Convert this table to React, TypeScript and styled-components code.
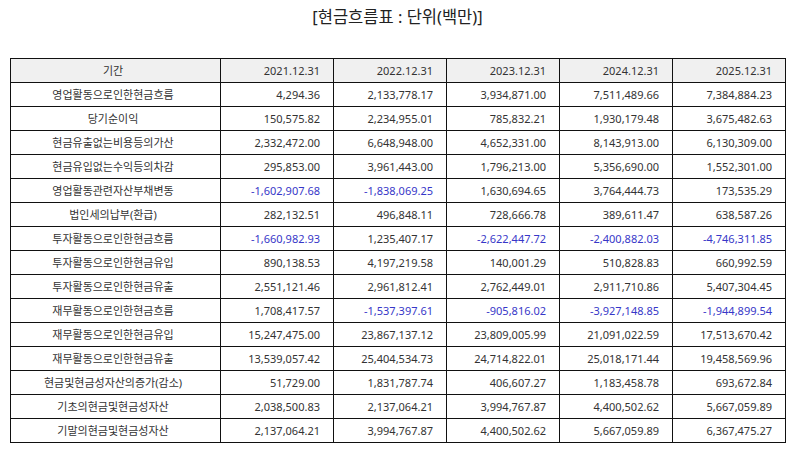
import React, { FC } from 'react';
import styled, { createGlobalStyle } from 'styled-components';

const GlobalStyle = createGlobalStyle`
  html, body {
    margin: 0;
    padding: 0;
    background: #ffffff;
  }
  body {
    font-family: "Noto Sans", "Noto Sans CJK KR", sans-serif;
    color: #333333;
  }
`;

interface Row {
  label: string;
  values: string[];
}

const YEARS: string[] = ['2021.12.31', '2022.12.31', '2023.12.31', '2024.12.31', '2025.12.31'];
const COL_WIDTHS: number[] = [210, 113, 113, 113, 113, 113];

const ROWS: Row[] = [
  { label: '영업활동으로인한현금흐름', values: ['4,294.36', '2,133,778.17', '3,934,871.00', '7,511,489.66', '7,384,884.23'] },
  { label: '당기순이익', values: ['150,575.82', '2,234,955.01', '785,832.21', '1,930,179.48', '3,675,482.63'] },
  { label: '현금유출없는비용등의가산', values: ['2,332,472.00', '6,648,948.00', '4,652,331.00', '8,143,913.00', '6,130,309.00'] },
  { label: '현금유입없는수익등의차감', values: ['295,853.00', '3,961,443.00', '1,796,213.00', '5,356,690.00', '1,552,301.00'] },
  { label: '영업활동관련자산부채변동', values: ['-1,602,907.68', '-1,838,069.25', '1,630,694.65', '3,764,444.73', '173,535.29'] },
  { label: '법인세의납부(환급)', values: ['282,132.51', '496,848.11', '728,666.78', '389,611.47', '638,587.26'] },
  { label: '투자활동으로인한현금흐름', values: ['-1,660,982.93', '1,235,407.17', '-2,622,447.72', '-2,400,882.03', '-4,746,311.85'] },
  { label: '투자활동으로인한현금유입', values: ['890,138.53', '4,197,219.58', '140,001.29', '510,828.83', '660,992.59'] },
  { label: '투자활동으로인한현금유출', values: ['2,551,121.46', '2,961,812.41', '2,762,449.01', '2,911,710.86', '5,407,304.45'] },
  { label: '재무활동으로인한현금흐름', values: ['1,708,417.57', '-1,537,397.61', '-905,816.02', '-3,927,148.85', '-1,944,899.54'] },
  { label: '재무활동으로인한현금유입', values: ['15,247,475.00', '23,867,137.12', '23,809,005.99', '21,091,022.59', '17,513,670.42'] },
  { label: '재무활동으로인한현금유출', values: ['13,539,057.42', '25,404,534.73', '24,714,822.01', '25,018,171.44', '19,458,569.96'] },
  { label: '현금및현금성자산의증가(감소)', values: ['51,729.00', '1,831,787.74', '406,607.27', '1,183,458.78', '693,672.84'] },
  { label: '기초의현금및현금성자산', values: ['2,038,500.83', '2,137,064.21', '3,994,767.87', '4,400,502.62', '5,667,059.89'] },
  { label: '기말의현금및현금성자산', values: ['2,137,064.21', '3,994,767.87', '4,400,502.62', '5,667,059.89', '6,367,475.27'] }
];

const Page = styled.div`
  padding: 0 9px 0 10px;
`;

const Title = styled.h1`
  margin: 0;
  height: 58px;
  padding-top: 5px;
  box-sizing: border-box;
  text-align: center;
  font-size: 16.5px;
  font-weight: 400;
  line-height: 24px;
  color: #222222;
`;

const Table = styled.table`
  width: 775px;
  border-collapse: collapse;
  table-layout: fixed;
  font-size: 11px;
`;

const Col = styled.col<{ $width: number }>`
  width: ${(p) => p.$width}px;
`;

const Cell = styled.td<{ $label?: boolean; $negative?: boolean; $head?: boolean }>`
  height: 24px;
  padding: 0 13px 0 8px;
  border: 1px solid #111111;
  box-sizing: border-box;
  white-space: nowrap;
  line-height: 1;
  font-weight: 400;
  text-align: ${(p) => (p.$label ? 'center' : 'right')};
  color: ${(p) => (p.$negative ? '#3737c8' : '#333333')};
  background: ${(p) => (p.$head ? '#f0f0f0' : '#ffffff')};
`;

const App: FC = () => (
  <Page>
    <GlobalStyle />
    <Title>[현금흐름표 : 단위(백만)]</Title>
    <Table>
      <colgroup>
        {COL_WIDTHS.map((w, i) => (
          <Col key={i} $width={w} />
        ))}
      </colgroup>
      <thead>
        <tr>
          <Cell as="th" $label $head>
            기간
          </Cell>
          {YEARS.map((y) => (
            <Cell as="th" key={y} $head>
              {y}
            </Cell>
          ))}
        </tr>
      </thead>
      <tbody>
        {ROWS.map((row) => (
          <tr key={row.label}>
            <Cell $label>{row.label}</Cell>
            {row.values.map((v, i) => (
              <Cell key={i} $negative={v.startsWith('-')}>
                {v}
              </Cell>
            ))}
          </tr>
        ))}
      </tbody>
    </Table>
  </Page>
);

export default App;
